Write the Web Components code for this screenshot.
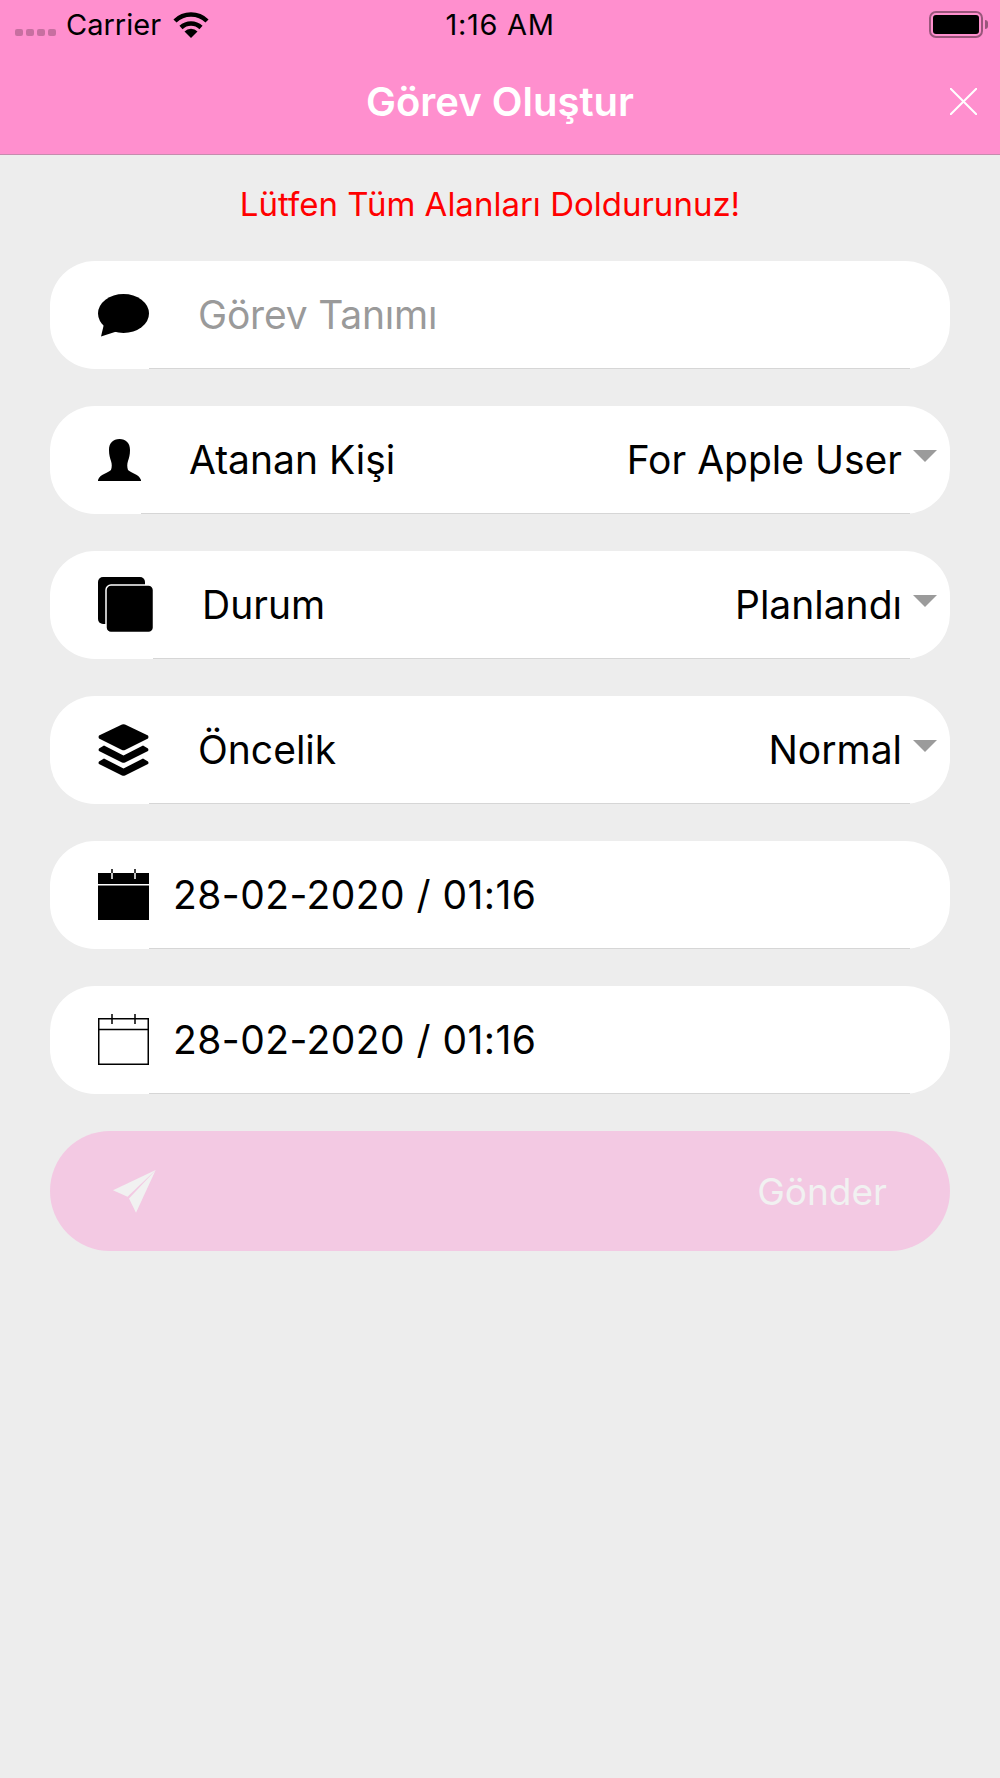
<!DOCTYPE html>
<html lang="tr">
<head>
<meta charset="utf-8">
<title>Görev Oluştur</title>
<style>
    html, body { margin: 0; padding: 0; background: #ededed; }
    body { font-family: Inter, "Liberation Sans", sans-serif; width: 1000px; height: 1778px; overflow: hidden; }
</style>
</head>
<body>
<task-screen>
    <status-bar slot="status" carrier="Carrier" time="1:16 AM"></status-bar>
    <nav-header slot="nav" heading="Görev Oluştur"></nav-header>
    <form-message slot="message">Lütfen Tüm Alanları Doldurunuz!</form-message>

    <form-row style="--line-start: 51px; --text-start: 49px;" placeholder>
        <svg slot="icon" width="51" height="43" viewBox="0 0 51 43"><ellipse cx="25.5" cy="19.5" rx="25.5" ry="19.5"/><path d="M6 30 L3 42.5 L20 37Z"/></svg>
        <span slot="label">Görev Tanımı</span>
    </form-row>
    <form-row style="--line-start: 43px; --text-start: 48px;" arrow>
        <svg slot="icon" width="43" height="43" viewBox="0 0 43 43"><path d="M21.500 0C28 0 32 4 32 11C32 16 31 19 30 22C29 25 29 28 30 31C33 34 41 35 43 41L43 42L0 42L0 41C2 35 10 34 13 31C14 28 14 25 13 22C12 19 11 16 11 11C11 4 15 0 21.500 0Z"/></svg>
        <span slot="label">Atanan Kişi</span>
        <span slot="value">For Apple User</span>
    </form-row>
    <form-row style="--line-start: 55px; --text-start: 49px;" arrow>
        <svg slot="icon" width="56" height="56" viewBox="0 0 56 56"><rect x="0" y="0" width="47" height="47" rx="5"/><rect x="8" y="8" width="47.5" height="47.5" rx="5" stroke="#fff" stroke-width="1.5"/></svg>
        <span slot="label">Durum</span>
        <span slot="value">Planlandı</span>
    </form-row>
    <form-row style="--line-start: 51px; --text-start: 49px;" arrow>
        <svg slot="icon" width="51" height="52" viewBox="0 0 51 52"><path d="M24 .5Q25.5 0 27 .5L50 11.5Q51 13 50 14.5L27 26Q25.500 26.500 24 26L1 14.500Q0 13 1 11.500Z"/><path d="M6 21.500L25.500 31.500L45 21.500L50 24.500Q51 26 50 27L27 38.500Q25.500 39 24 38.500L1 27Q0 26 1 24.500Z"/><path d="M6 34.500L25.500 44.500L45 34.500L50 37.500Q51 39 50 40L27 51.500Q25.500 52 24 51.500L1 40Q0 39 1 37.500Z"/></svg>
        <span slot="label">Öncelik</span>
        <span slot="value">Normal</span>
    </form-row>
    <form-row style="--line-start: 51px; --text-start: 24px;" dates>
        <svg slot="icon" style="margin-bottom: 2px" width="51" height="51" viewBox="0 0 51 51"><rect y="4" width="51" height="11"/><rect y="16.500" width="51" height="34.500"/><path d="M14 0V4M37 0V4" stroke="#000" stroke-width="1.500"/><path d="M14 4V10M37 4V10" stroke="#fff" stroke-width="1.500"/></svg>
        <span slot="label">28-02-2020 / 01:16</span>
    </form-row>
    <form-row style="--line-start: 51px; --text-start: 24px;" dates>
        <svg slot="icon" style="margin-bottom: 2px" width="51" height="51" viewBox="0 0 51 51"><rect x=".75" y="4.750" width="49.500" height="45.500" fill="none" stroke="#000" stroke-width="1.500"/><path d="M0 15.500H51M14 0V10M37 0V10" stroke="#000" stroke-width="1.500"/></svg>
        <span slot="label">28-02-2020 / 01:16</span>
    </form-row>

    <submit-button>
        <svg slot="icon" width="43" height="43" viewBox="0 0 43 43"><path d="M42.700 0L0 20.300L14.500 26.800Z"/><path d="M42.700 0L16 28.500L23 42.700Z"/></svg>
        Gönder
    </submit-button>
</task-screen>

<script>
class TaskScreen extends HTMLElement {
    constructor() {
        super();
        this.attachShadow({ mode: 'open' });
        this.shadowRoot.innerHTML = `
            <style>
                :host { display: block; }
                header {
                    background: #ff8fce;
                    border-bottom: 1px solid #c68bae;
                    height: 154px;
                    box-sizing: content-box;
                }
                main {
                    display: flex;
                    flex-direction: column;
                    gap: 37px;
                    padding: 0 50px;
                }
            </style>
            <header>
                <slot name="status"></slot>
                <slot name="nav"></slot>
            </header>
            <slot name="message"></slot>
            <main><slot></slot></main>
        `;
    }
}

class StatusBar extends HTMLElement {
    constructor() {
        super();
        this.attachShadow({ mode: 'open' });
    }

    connectedCallback() {
        const carrier = this.getAttribute('carrier');
        const time = this.getAttribute('time');
        this.shadowRoot.innerHTML = `
            <style>
                :host {
                    display: grid;
                    grid-template-columns: 1fr auto 1fr;
                    align-items: center;
                    height: 48px;
                    padding: 0 12px 0 15px;
                    font-size: 29px;
                    color: #000;
                }
                .left { display: flex; align-items: center; }
                .dots { display: flex; gap: 3px; margin: 16px 10px 0 0; }
                .dots i { width: 8px; height: 7px; border-radius: 2px; background: rgba(0,0,0,.22); }
                .wifi { margin: 0 0 0 12px; display: block; }
                .time { letter-spacing: .7px; margin-left: -3px; }
                .right { justify-self: end; display: flex; align-items: center; }
                .batt {
                    width: 54px; height: 27px; box-sizing: border-box;
                    border: 2px solid rgba(0,0,0,.4); border-radius: 7px; padding: 2px;
                }
                .batt b { display: block; height: 100%; background: #000; border-radius: 3px; }
                .cap { width: 3px; height: 9px; margin-left: 2px; background: rgba(0,0,0,.4); border-radius: 0 3px 3px 0; }
            </style>
            <div class="left">
                <div class="dots"><i></i><i></i><i></i><i></i></div>
                <span>${carrier}</span>
                <svg class="wifi" width="36" height="27" viewBox="0 0 36 27">
                    <path d="M2 10A23 23 0 0 1 34 10M8 16.500A14.500 14.500 0 0 1 28 16.500" fill="none" stroke="#000" stroke-width="4.500"/>
                    <path d="M18 27L11.500 20.500A9 9 0 0 1 24.500 20.500Z"/>
                </svg>
            </div>
            <span class="time">${time}</span>
            <div class="right"><div class="batt"><b></b></div><div class="cap"></div></div>
        `;
    }
}

class NavHeader extends HTMLElement {
    constructor() {
        super();
        this.attachShadow({ mode: 'open' });
    }

    connectedCallback() {
        this.shadowRoot.innerHTML = `
            <style>
                :host {
                    display: grid;
                    grid-template-columns: 1fr auto 1fr;
                    align-items: center;
                    height: 106px;
                    padding-right: 23px;
                    color: #fff;
                }
                h1 { grid-column: 2; margin: 0 0 0 23px; font-size: 40px; font-weight: 600; }
                svg { justify-self: end; display: block; }
            </style>
            <h1>${this.getAttribute('heading')}</h1>
            <svg width="27" height="27" viewBox="0 0 27 27"><path d="M0 0L27 27M27 0L0 27" stroke="#fff" stroke-width="2" fill="none"/></svg>
        `;
    }
}

class FormMessage extends HTMLElement {
    constructor() {
        super();
        this.attachShadow({ mode: 'open' });
        this.shadowRoot.innerHTML = `
            <style>
                :host {
                    display: flex;
                    justify-content: center;
                    align-items: center;
                    height: 106px;
                    padding: 0 20px 9px 0;
                    box-sizing: border-box;
                    color: #ff0000;
                    font-size: 33px;
                }
            </style>
            <slot></slot>
        `;
    }
}

class FormRow extends HTMLElement {
    constructor() {
        super();
        this.attachShadow({ mode: 'open' });
        this.shadowRoot.innerHTML = `
            <style>
                :host {
                    display: flex;
                    height: 108px;
                    background: #fff;
                    border-radius: 45px;
                    color: #000;
                    font-size: 39px;
                }
                :host([dates]) { letter-spacing: .45px; }
                :host([placeholder]) { letter-spacing: -.2px; }
                .icon {
                    flex: none;
                    width: var(--line-start);
                    margin-left: 48px;
                    display: flex;
                    align-items: center;
                }
                .icon ::slotted(svg) { display: block; flex: none; }
                .main {
                    flex: 1;
                    display: flex;
                    justify-content: space-between;
                    align-items: center;
                    border-bottom: 1px solid #d6d6d6;
                    padding: 0 8px 0 var(--text-start);
                    min-width: 0;
                }
                :host([placeholder]) .label { color: #9a9a9a; }
                .end { flex: none; width: 40px; position: relative; }
                .arrow {
                    display: none;
                    position: absolute;
                    left: 3px;
                    top: 44px;
                    width: 0;
                    height: 0;
                    border-left: 12.500px solid transparent;
                    border-right: 12.500px solid transparent;
                    border-top: 12px solid #9b9b9b;
                }
                :host([arrow]) .arrow { display: block; }
            </style>
            <div class="icon"><slot name="icon"></slot></div>
            <div class="main">
                <span class="label"><slot name="label"></slot></span>
                <span class="value"><slot name="value"></slot></span>
            </div>
            <div class="end"><div class="arrow"></div></div>
        `;
    }
}

class SubmitButton extends HTMLElement {
    constructor() {
        super();
        this.attachShadow({ mode: 'open' });
        this.shadowRoot.innerHTML = `
            <style>
                :host {
                    display: flex;
                    justify-content: space-between;
                    align-items: center;
                    height: 120px;
                    padding: 0 63px;
                    background: #f3c9e3;
                    border-radius: 60px;
                    color: #f1f1f1;
                    font-size: 37px;
                    fill: #f1f1f1;
                }
                ::slotted(svg) { display: block; }
            </style>
            <slot name="icon"></slot>
            <span><slot></slot></span>
        `;
    }
}

customElements.define('task-screen', TaskScreen);
customElements.define('status-bar', StatusBar);
customElements.define('nav-header', NavHeader);
customElements.define('form-message', FormMessage);
customElements.define('form-row', FormRow);
customElements.define('submit-button', SubmitButton);
</script>
</body>
</html>
